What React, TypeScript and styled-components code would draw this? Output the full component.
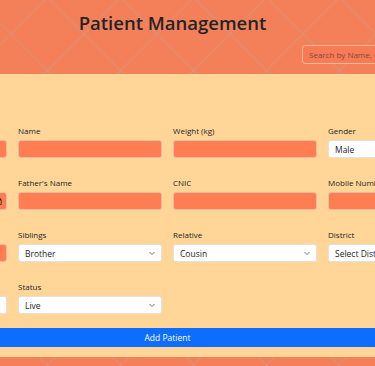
import React from "react";
import styled, { createGlobalStyle, css } from "styled-components";

const ORANGE = "#f4805a";
const PEACH = "#ffd697";
const CORAL = "#ff7d52";
const LINE = "rgba(196, 160, 150, 0.7)";
const FONT = `"Open Sans", "Noto Sans", sans-serif`;

const GlobalStyle = createGlobalStyle`
  html, body {
    margin: 0;
    padding: 0;
    overflow: hidden;
    background: ${PEACH};
  }
  * { box-sizing: border-box; }
`;

const lattice = (x: string, y: string) => css`
  background-color: ${ORANGE};
  background-image:
    linear-gradient(45deg, transparent calc(50% - 0.7px), ${LINE} 50%, transparent calc(50% + 0.7px)),
    linear-gradient(-45deg, transparent calc(50% - 0.7px), ${LINE} 50%, transparent calc(50% + 0.7px));
  background-size: 73px 73px;
  background-position: ${x} ${y};
`;

const Page = styled.div`
  width: 609px;
  margin-left: -137px;
  font-family: ${FONT};
  color: #212529;
`;

const Header = styled.header`
  ${lattice("38.5px", "70.5px")}
  height: 74px;
  display: flex;
  flex-direction: column;
  align-items: center;
  padding-top: 11px;
`;

const Title = styled.h1`
  margin: 0;
  font-size: 18.5px;
  font-weight: 600;
  line-height: 24px;
  color: #212529;
  transform: translateX(5px);
`;

const SearchRow = styled.div`
  align-self: stretch;
  display: flex;
  padding-left: 439px;
  margin-top: 10px;
`;

const Search = styled.input`
  display: block;
  width: 160px;
  height: 19px;
  padding: 0 6px;
  border: 1px solid #fbb796;
  border-radius: 3px;
  background: #f77c56;
  font-family: ${FONT};
  font-size: 8px;
  color: #212529;
  outline: none;
  &::placeholder {
    color: #7a4a3a;
  }
`;

const Form = styled.form`
  padding-top: 51px;
  display: flex;
  flex-direction: column;
`;

const Grid = styled.div`
  display: grid;
  grid-template-columns: repeat(4, 144px);
  align-items: start;
  column-gap: 11px;
  row-gap: 19px;
`;

const Field = styled.div`
  display: flex;
  flex-direction: column;
`;

const Label = styled.label`
  font-size: 8px;
  line-height: 12px;
  margin-bottom: 3px;
  color: #212529;
`;

const TextInput = styled.input`
  display: block;
  height: 18px;
  width: 100%;
  padding: 0 4px 0 6px;
  border: 1px solid #f0b9a0;
  border-radius: 3px;
  background: ${CORAL};
  font-family: ${FONT};
  font-size: 8px;
  line-height: 16px;
  color: #212529;
  outline: none;
  &::-webkit-datetime-edit {
    padding: 0;
  }
  &::-webkit-calendar-picker-indicator {
    width: 7px;
    height: 7px;
    margin: 0;
    padding: 0;
  }
`;

const SelectWrap = styled.div`
  position: relative;
  height: 18px;
`;

const Select = styled.select`
  display: block;
  appearance: none;
  -webkit-appearance: none;
  width: 100%;
  height: 18px;
  padding: 0 18px 0 6px;
  border: 1px solid #e3e1dc;
  border-radius: 3px;
  background: #fff;
  font-family: ${FONT};
  font-size: 8.5px;
  color: #212529;
  outline: none;
`;

const Chevron = styled.svg`
  position: absolute;
  right: 7px;
  top: 7px;
  width: 6px;
  height: 5px;
  pointer-events: none;
`;

const Button = styled.button`
  display: block;
  margin-top: 14px;
  height: 19px;
  width: 100%;
  border: none;
  border-radius: 0;
  background: #0d6efd;
  color: #fff;
  font-family: ${FONT};
  font-size: 8.5px;
  padding: 0;
`;

const Footer = styled.footer`
  ${lattice("38.5px", "8px")}
  margin-top: 10px;
  height: 30px;
`;

type Opt = { options: string[] };

const Dropdown: React.FC<Opt> = ({ options }) => (
  <SelectWrap>
    <Select defaultValue={options[0]}>
      {options.map((o) => (
        <option key={o}>{o}</option>
      ))}
    </Select>
    <Chevron viewBox="0 0 12 10">
      <path d="M1.5 2.5l4.5 4.5 4.5-4.5" fill="none" stroke="#495057" strokeWidth="1.6" strokeLinecap="round" strokeLinejoin="round" />
    </Chevron>
  </SelectWrap>
);

type FieldDef =
  | { kind: "text"; label: string; type?: string }
  | { kind: "select"; label: string; options: string[] };

const fields: FieldDef[] = [
  { kind: "text", label: "Patient ID" },
  { kind: "text", label: "Name" },
  { kind: "text", label: "Weight (kg)" },
  { kind: "select", label: "Gender", options: ["Male", "Female", "Other"] },
  { kind: "text", label: "Date of Birth", type: "date" },
  { kind: "text", label: "Father's Name" },
  { kind: "text", label: "CNIC" },
  { kind: "text", label: "Mobile Number" },
  { kind: "text", label: "Address" },
  { kind: "select", label: "Siblings", options: ["Brother", "Sister", "None"] },
  { kind: "select", label: "Relative", options: ["Cousin", "Uncle", "Aunt"] },
  { kind: "select", label: "District", options: ["Select District", "Lahore", "Karachi"] },
  { kind: "select", label: "Blood Group", options: ["A+", "B+", "O+"] },
  { kind: "select", label: "Status", options: ["Live", "Deceased"] },
];

export default function App() {
  return (
    <>
      <GlobalStyle />
      <Page>
        <Header>
          <Title>Patient Management</Title>
          <SearchRow>
            <Search placeholder="Search by Name, CNIC..." />
          </SearchRow>
        </Header>
        <Form onSubmit={(e) => e.preventDefault()}>
          <Grid>
            {fields.map((f) => (
              <Field key={f.label}>
                <Label>{f.label}</Label>
                {f.kind === "text" ? (
                  <TextInput type={f.type ?? "text"} />
                ) : (
                  <Dropdown options={f.options} />
                )}
              </Field>
            ))}
          </Grid>
          <Button type="submit">Add Patient</Button>
        </Form>
        <Footer />
      </Page>
    </>
  );
}
